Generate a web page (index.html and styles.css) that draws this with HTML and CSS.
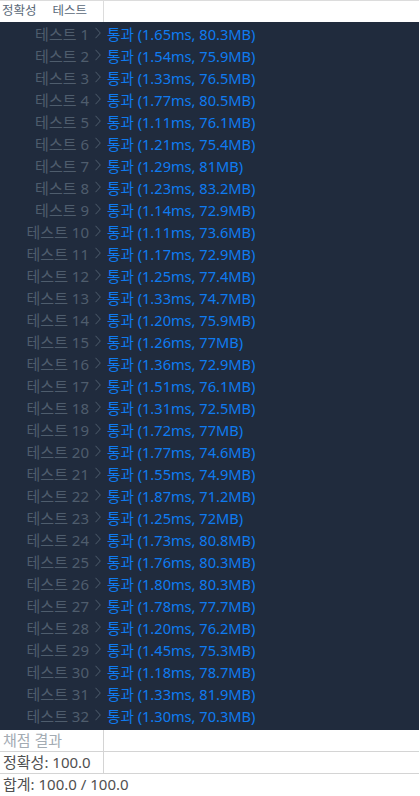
FILE: index.html
```html
<!DOCTYPE html>
<html lang="ko">
<head>
<meta charset="utf-8">
<link rel="stylesheet" href="styles.css">
</head>
<body>
<div class="console">
  <div class="head-row">
    <div class="head-cell"><span>정확성</span><span>테스트</span></div>
    <div class="head-empty"></div>
  </div>
  <div class="results" id="results"></div>
  <div class="foot-row split">
    <div class="foot-cell muted">채점 결과</div>
    <div class="foot-empty"></div>
  </div>
  <div class="foot-row split">
    <div class="foot-cell">정확성: 100.0</div>
    <div class="foot-empty"></div>
  </div>
  <div class="foot-row">
    <div class="foot-cell">합계: 100.0 / 100.0</div>
  </div>
</div>
<script>
var data = [
["1.65ms","80.3MB"],["1.54ms","75.9MB"],["1.33ms","76.5MB"],["1.77ms","80.5MB"],
["1.11ms","76.1MB"],["1.21ms","75.4MB"],["1.29ms","81MB"],["1.23ms","83.2MB"],
["1.14ms","72.9MB"],["1.11ms","73.6MB"],["1.17ms","72.9MB"],["1.25ms","77.4MB"],
["1.33ms","74.7MB"],["1.20ms","75.9MB"],["1.26ms","77MB"],["1.36ms","72.9MB"],
["1.51ms","76.1MB"],["1.31ms","72.5MB"],["1.72ms","77MB"],["1.77ms","74.6MB"],
["1.55ms","74.9MB"],["1.87ms","71.2MB"],["1.25ms","72MB"],["1.73ms","80.8MB"],
["1.76ms","80.3MB"],["1.80ms","80.3MB"],["1.78ms","77.7MB"],["1.20ms","76.2MB"],
["1.45ms","75.3MB"],["1.18ms","78.7MB"],["1.33ms","81.9MB"],["1.30ms","70.3MB"]
];
var html = "";
for (var i = 0; i < data.length; i++) {
  html += '<div class="row"><div class="label">테스트 ' + (i + 1) +
    '<svg class="chev" viewBox="0 0 6 12" width="6" height="12"><path d="M0.5 0.8 L5.3 6 L0.5 11.2" fill="none" stroke="currentColor" stroke-width="1"/></svg></div>' +
    '<div class="res">통과 (' + data[i][0] + ', ' + data[i][1] + ')</div></div>';
}
document.getElementById("results").innerHTML = html;
</script>
</body>
</html>
```
FILE: styles.css
```css
html, body {
  margin: 0;
  padding: 0;
  background: #ffffff;
}
body {
  font-family: "Noto Sans", "Noto Sans CJK KR", sans-serif;
  width: 420px;
}
.console {
  width: 419px;
}
.head-row {
  display: grid;
  grid-template-columns: 104px 1fr;
  height: 22px;
  border-top: 1px solid #dcdcdc;
  box-sizing: border-box;
}
.head-cell {
  display: flex;
  gap: 16px;
  border-right: 1px solid #dcdcdc;
  font-size: 12.5px;
  line-height: 20px;
  color: #5a6878;
  padding-left: 2px;
  white-space: nowrap;
}
.results {
  background: #202b3d;
  padding: 0 0 4px 0;
}
.row {
  display: grid;
  grid-template-columns: 104px 1fr;
  height: 22px;
  align-items: center;
  font-size: 15px;
  white-space: nowrap;
}
.label {
  display: flex;
  align-items: center;
  justify-content: flex-end;
  color: #4f5d6d;
  padding-right: 3px;
}
.chev {
  margin-left: 6px;
  color: #4f5d6d;
}
.res {
  color: #0f7bf0;
  padding-left: 3px;
  font-size: 14.6px;
}
.foot-row {
  display: grid;
  grid-template-columns: 1fr;
  height: 22px;
  border-bottom: 1px solid #d4d4d4;
  box-sizing: border-box;
}
.foot-row:last-child {
  border-bottom: none;
}
.foot-row.split {
  grid-template-columns: 104px 1fr;
}
.foot-row.split .foot-cell {
  border-right: 1px solid #d4d4d4;
}
.foot-cell {
  font-size: 15px;
  line-height: 21px;
  color: #505050;
  padding-left: 3px;
  white-space: nowrap;
}
.foot-cell.muted {
  color: #a3abb3;
}
```
